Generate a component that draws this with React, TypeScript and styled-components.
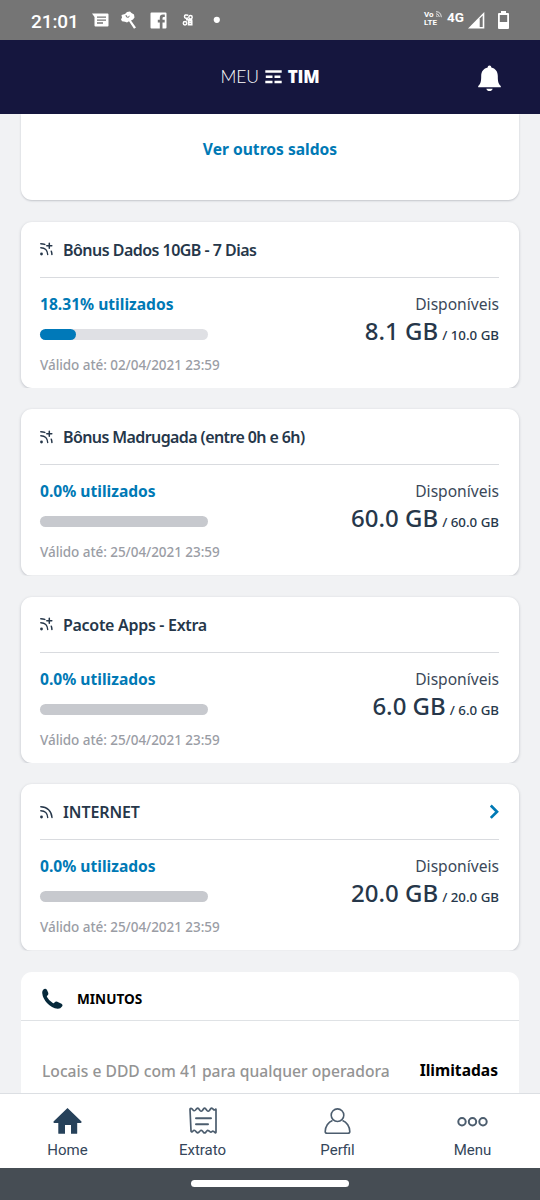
import React from "react";
import styled, { createGlobalStyle } from "styled-components";

const Global = createGlobalStyle`
  * { box-sizing: border-box; }
  body { margin: 0; background: #f1f2f4; font-family: "Noto Sans", "Open Sans", sans-serif; }
  svg { display: block; flex: none; }
`;

const Screen = styled.div`
  width: 540px;
  height: 1200px;
  display: flex;
  flex-direction: column;
  overflow: hidden;
  background: #f1f2f4;
  color: #26374a;
`;

const StatusBar = styled.header`
  height: 40px;
  flex: none;
  display: flex;
  align-items: center;
  background: #757575;
  color: #fff;
  font-family: Roboto, sans-serif;
`;

const Clock = styled.span`
  width: 59px;
  padding-top: 2px;
  margin-left: 31px;
  font-size: 19px;
  font-weight: 500;
  letter-spacing: -0.1px;
  white-space: nowrap;
`;

const VoLte = styled.div`
  margin-left: auto;
  width: 18px;
  display: flex;
  flex-direction: column;
  font-size: 8px;
  line-height: 8.5px;
  font-weight: 700;
  padding-bottom: 2px;
  white-space: nowrap;
`;

const VoLine = styled.div`
  display: flex;
  align-items: center;
  gap: 1px;
`;

const Network = styled.span`
  margin: 0 3px 7px 5px;
  width: 18px;
  font-size: 13.5px;
  font-weight: 700;
`;

const Battery = styled.div`
  margin: 0 31px 0 13px;
`;

const AppBar = styled.div`
  height: 74px;
  flex: none;
  display: grid;
  grid-template-columns: 1fr auto 1fr;
  align-items: center;
  background: #15163e;
  color: #fff;
`;

const Brand = styled.h1`
  grid-column: 2;
  margin: 0;
  display: flex;
  align-items: center;
  gap: 6px;
  font: 300 17.5px/24px Lato, sans-serif;
  letter-spacing: -0.2px;
  strong { font: 800 17px/24px "Open Sans", sans-serif; letter-spacing: -0.2px; }
`;

const Bell = styled.div`
  justify-self: end;
  margin-right: 39px;
  padding-top: 2px;
`;

const Content = styled.main`
  flex: 1;
  min-height: 0;
  overflow: hidden;
  padding: 0 21px;
  display: flex;
  flex-direction: column;
  gap: 21px;
`;

const OtherBalances = styled.section`
  height: 85.5px;
  flex: none;
  border-radius: 0 0 11px 11px;
  background: #fff;
  box-shadow: 0 1px 2px rgba(30, 40, 60, 0.22);
  text-align: center;
  padding-top: 24px;
  margin-bottom: 1px;
`;

const Link = styled.a`
  color: #0079b5;
  font-size: 15.6px;
  line-height: 22px;
  font-weight: 700;
  display: block;
`;

const Card = styled.section`
  height: 166.5px;
  flex: none;
  padding: 0 20px 0 19px;
  border-radius: 11px;
  background: #fff;
  box-shadow: 0 1px 3px rgba(30, 40, 60, 0.25);
  clip-path: inset(-3px -3px 0 -3px);
`;

const CardHeader = styled.div`
  height: 56px;
  display: flex;
  align-items: center;
  border-bottom: 1px solid #d9dbdf;
`;

const CardTitle = styled.h2<{ $spacing: number }>`
  flex: 1;
  margin: 1px 0 0 10px;
  font-size: 16px;
  line-height: 22px;
  font-weight: 600;
  letter-spacing: ${(p) => p.$spacing}px;
  white-space: nowrap;
`;

const CardBody = styled.div`
  display: flex;
  justify-content: space-between;
  padding-top: 15px;
`;

const Usage = styled.div`
  width: 200px;
`;

const Used = styled.div`
  color: #0079b5;
  font-size: 15.6px;
  line-height: 22px;
  font-weight: 700;
`;

const Track = styled.div<{ $empty: boolean }>`
  width: 168px;
  height: 11px;
  margin-top: 14px;
  border-radius: 6px;
  background: ${(p) => (p.$empty ? "#c7c9ce" : "#dfe0e4")};
`;

const Fill = styled.div`
  height: 100%;
  border-radius: 6px;
  background: #0079b9;
`;

const Expiry = styled.div`
  margin-top: 15px;
  color: #9a9da5;
  font-size: 13.5px;
  line-height: 20px;
  font-weight: 500;
  letter-spacing: -0.06px;
  white-space: nowrap;
`;

const Available = styled.div`
  text-align: right;
  font-size: 15.6px;
  line-height: 22px;
  color: #3b4859;
`;

const Amount = styled.div`
  display: flex;
  align-items: baseline;
  justify-content: flex-end;
  gap: 4px;
  margin-top: -1px;
  color: #26374a;
  font-size: 24px;
  line-height: 34px;
  font-weight: 500;
  white-space: nowrap;
`;

const Total = styled.span`
  font-size: 13.3px;
`;

const Minutes = styled.section`
  height: 160px;
  flex: none;
  border-radius: 11px 11px 0 0;
  background: #fff;
`;

const MinutesHeader = styled.div`
  height: 49px;
  padding: 6px 20px 0;
  display: flex;
  align-items: center;
  gap: 13px;
  color: #000;
  font-size: 13.6px;
  font-weight: 700;
  border-bottom: 1px solid #dfe2e5;
`;

const MinutesRow = styled.div`
  display: flex;
  justify-content: space-between;
  padding: 39px 21px 0;
  line-height: 22px;
  font-size: 15.65px;
  color: #949494;
  font-weight: 500;
  white-space: nowrap;
  strong { color: #000; font-size: 15.6px; line-height: 20px; }
`;

const TabBar = styled.nav`
  height: 75px;
  flex: none;
  display: grid;
  grid-template-columns: repeat(4, 1fr);
  background: #fff;
  border-top: 1px solid #dcdfe3;
`;

const Tab = styled.a`
  display: flex;
  flex-direction: column;
  align-items: center;
  padding-top: 13px;
  gap: 5px;
  color: #34465a;
  font: 400 15px/20px Roboto, sans-serif;
`;

const GestureBar = styled.footer`
  height: 32px;
  flex: none;
  display: flex;
  justify-content: center;
  align-items: flex-start;
  padding-top: 12px;
  background: #464d54;
`;

const GesturePill = styled.div`
  width: 158px;
  height: 7px;
  border-radius: 4px;
  background: #fff;
`;

const NotificationIcons = () => (
  <svg width="132" height="24" viewBox="90 8.500 132 24" fill="#fff">
    <path d="M92 14h15.500q1 0 1 1v11q0 1-1 1h-12q-1 0-1-1v-8.500z" />
    <path d="M97 17.700h9M97 20.600h9M97 23.500h6" stroke="#757575" strokeWidth="1.300" />
    <path d="M121.500 15.500l3.500-1 2-2 3-.5 1.500 1.500 2.500 1.500.5 3-1.500 2-2 1 5 7-2 1.300-5-7.500-2 1.200-2-.7-3-.5-1-2 1-1.500z" />
    <path d="M126 15.500l.5 2 2 .3.800-1.500" fill="none" stroke="#757575" strokeWidth="1" />
    <path d="M151.500 13h14q1 0 1 1v14q0 1-1 1h-3v-6h2.200v-2.700h-2.200v-1.500q0-1.300 1.300-1.300h1V15h-2q-3 0-3 3.200v2.100h-2V23h2v6h-8.300q-1 0-1-1V14q0-1 1-1z" />
    <g fill="none" stroke="#fff" strokeWidth="1.500">
      <path d="M188.200 15.700q-3.700-1-3.700 1.400t3.700 1.500" />
      <circle cx="190.500" cy="17.700" r="1.700" />
      <circle cx="185" cy="23.700" r="1.700" />
      <path d="M188.500 21.500h3.300v3.700h-3.300zM188.500 23.300h3.300M186 20.300h6.300" />
    </g>
    <circle cx="216.800" cy="20.300" r="3.100" />
  </svg>
);

const VoWaves = () => (
  <svg width="7" height="7" viewBox="0 0 7 7" fill="none" stroke="#fff" strokeWidth=".8">
    <path d="M1 .7q5 0 5.300 5.500M1 2.700q3 .2 3.300 3.300M1 4.700q1 .1 1.300 1.200" />
  </svg>
);

const SignalIcon = () => (
  <svg width="17" height="17" viewBox="0 0 17 17">
    <path d="M0 16.500L16.300 0v16.500z" fill="#fff" />
    <path d="M11.700 6.500L14.700 3.500V15H11.700z" fill="#757575" />
  </svg>
);

const BatteryIcon = () => (
  <svg width="11" height="18" viewBox="0 0 11 18" fill="#fff">
    <path d="M3 0h5v2h2q1 0 1 1v14q0 1-1 1H1q-1 0-1-1V3q0-1 1-1h2z" />
    <path d="M1.800 4h7.400v7H1.800z" fill="#757575" />
  </svg>
);

const BrandMark = () => (
  <svg width="17" height="14" viewBox="0 0 17 14" fill="none" stroke="#fff" strokeWidth="2.500">
    <path d="M.3 1.500h16.400M.8 6.800h6.700M9.500 6.800h5.900M.3 12.100h7.200M9.500 12.100h7.200" />
  </svg>
);

const BellIcon = () => (
  <svg width="23" height="27" viewBox="0 0 23 27" fill="#fff">
    <path d="M11.500.5c1.200 0 1.800.8 1.800 1.900 4.100.9 6.500 4 6.500 8.500 0 5.500.5 7.500 3 10.200v1.200H.2v-1.200c2.500-2.700 3-4.700 3-10.200 0-4.500 2.400-7.600 6.500-8.500 0-1.100.6-1.900 1.800-1.900zM8.300 23.700h6.400c-.5 1.500-1.600 2.300-3.200 2.300s-2.700-.8-3.200-2.300z" />
  </svg>
);

const SignalWaves = ({ plus }: { plus: boolean }) => (
  <svg width="13" height="14" viewBox="0 0 13 14" fill="none" stroke="#26374a" strokeWidth="1.400" strokeLinecap="round">
    <circle cx="1.500" cy="12" r="1.400" fill="#26374a" stroke="none" />
    <path d="M.8 5.700C4.900 5.700 7.600 8.500 7.700 12.500" />
    {plus ? (
      <path d="M.8 1.700q2.200 0 4 .7M11.300 9.300q.6 1.600.6 3.200M9.300 1.200v5M6.800 3.700h5" strokeWidth="1.500" />
    ) : (
      <path d="M.8 1.700C7 1.700 11.700 6.100 12 12.500" />
    )}
  </svg>
);

const Chevron = () => (
  <svg width="10" height="15" viewBox="0 0 10 15" fill="none" stroke="#0079b5" strokeWidth="2.700">
    <path d="M1.800 1.500L8 7.700l-6.200 6.200" />
  </svg>
);

const PhoneIcon = () => (
  <svg width="23" height="22" viewBox="0 0 23 22" fill="#06293b">
    <path d="M2.200 1.800q2-1.900 3.700 0l1.300 3q.5 1.600-.8 2.700-.8.700-.4 1.600 1.900 3.800 5.800 5.900 1 .5 1.700-.4 1.200-1.400 2.800-.8l4.200 2q1.700 1 .5 2.800-1.500 2.300-4.300 2.200Q10.700 20.100 6 15 1.700 10.200 1.200 5q-.1-2 1-3.200z" />
  </svg>
);

const HomeIcon = () => (
  <svg width="29" height="28" viewBox="0 0 29 28" fill="#26415a">
    <path d="M14.500 1L28.500 14.500q.5 1-.8 1.500h-3.500v10.200q0 .5-.5.500h-5.700v-8.700h-6v8.700H5.800q-.5 0-.5-.5V16H1.300q-1.300-.5-.8-1.500z" />
  </svg>
);

const ReceiptIcon = () => (
  <svg width="28" height="28" viewBox="0 0 28 28" fill="none" stroke="#4c5d6e" strokeWidth="1.700" strokeLinejoin="round" strokeLinecap="round">
    <path d="M1 2.500q0-1.200 1-1.200 1.300.2 2 1.700 1 1.500 2.500 0l1.200-1.300q1-.9 2 0L11 3.500q1.200 1.300 2.400 0l1.200-1.800q1-.9 2 0L18 3.500q1.200 1.300 2.400 0l1.200-1.800q1-.9 2 0l1 1q1 .6 2-.5.400-.4.400.500v22.500q-.1.900-.9.500l-1.500-1.300q-.8-.6-1.700.2-1 .9-2 0l-1.200-.8q-1-.8-1.900.2l-1.200 1.500q-1 .9-2 0l-1.200-1.500q-1.200-1.300-2.400 0l-1.300 1.300q-1 .9-2 0l-1.200-1.300q-1.500-1.500-2.500 0-.7 1-1.600.8-.4-.100-.4-1z" />
    <path d="M7 11.200h15M7 17.300h12" strokeWidth="2" />
  </svg>
);

const ProfileIcon = () => (
  <svg width="27" height="28" viewBox="0 0 27 28" fill="none" stroke="#4c5d6e" strokeWidth="1.600">
    <circle cx="13.500" cy="8.200" r="6.300" />
    <path d="M8.500 13.500C4.300 15 1.200 19.700 1.200 24.500q0 1.800 2 1.800h20.600q2 0 2-1.800c0-4.800-3.100-9.500-7.300-11" />
  </svg>
);

const DotsIcon = () => (
  <svg width="31" height="28" viewBox="0 0 31 28" fill="none" stroke="#4c5d6e" strokeWidth="2">
    <circle cx="5" cy="14.700" r="3.700" />
    <circle cx="15.500" cy="14.700" r="3.700" />
    <circle cx="26" cy="14.700" r="3.700" />
  </svg>
);

type Balance = {
  title: string;
  spacing: number;
  used: number;
  label: string;
  left: string;
  total: string;
  until: string;
  plus: boolean;
};

const balances: Balance[] = [
  { title: "Bônus Dados 10GB - 7 Dias", spacing: -0.53, used: 21.5, label: "18.31%", left: "8.1 GB", total: "10.0 GB", until: "02/04/2021 23:59", plus: true },
  { title: "Bônus Madrugada (entre 0h e 6h)", spacing: -0.6, used: 0, label: "0.0%", left: "60.0 GB", total: "60.0 GB", until: "25/04/2021 23:59", plus: true },
  { title: "Pacote Apps - Extra", spacing: -0.3, used: 0, label: "0.0%", left: "6.0 GB", total: "6.0 GB", until: "25/04/2021 23:59", plus: true },
  { title: "INTERNET", spacing: -0.1, used: 0, label: "0.0%", left: "20.0 GB", total: "20.0 GB", until: "25/04/2021 23:59", plus: false },
];

const BalanceCard = ({ item }: { item: Balance }) => (
  <Card>
    <CardHeader>
      <SignalWaves plus={item.plus} />
      <CardTitle $spacing={item.spacing}>{item.title}</CardTitle>
      {!item.plus && <Chevron />}
    </CardHeader>
    <CardBody>
      <Usage>
        <Used>{item.label} utilizados</Used>
        <Track $empty={item.used === 0}>{item.used > 0 && <Fill style={{ width: `${item.used}%` }} />}</Track>
        <Expiry>Válido até: {item.until}</Expiry>
      </Usage>
      <div>
        <Available>Disponíveis</Available>
        <Amount>
          <span>{item.left}</span>
          <Total>/ {item.total}</Total>
        </Amount>
      </div>
    </CardBody>
  </Card>
);

export default function App() {
  return (
    <Screen>
      <Global />
      <StatusBar>
        <Clock>21:01</Clock>
        <NotificationIcons />
        <VoLte>
          <VoLine>Vo<VoWaves /></VoLine>
          <span>LTE</span>
        </VoLte>
        <Network>4G</Network>
        <SignalIcon />
        <Battery><BatteryIcon /></Battery>
      </StatusBar>
      <AppBar>
        <Brand>MEU<BrandMark /><strong>TIM</strong></Brand>
        <Bell><BellIcon /></Bell>
      </AppBar>
      <Content>
        <OtherBalances><Link>Ver outros saldos</Link></OtherBalances>
        {balances.map((item) => <BalanceCard key={item.title} item={item} />)}
        <Minutes>
          <MinutesHeader><PhoneIcon />MINUTOS</MinutesHeader>
          <MinutesRow>
            <span>Locais e DDD com 41 para qualquer operadora</span>
            <strong>Ilimitadas</strong>
          </MinutesRow>
        </Minutes>
      </Content>
      <TabBar>
        <Tab><HomeIcon />Home</Tab>
        <Tab><ReceiptIcon />Extrato</Tab>
        <Tab><ProfileIcon />Perfil</Tab>
        <Tab><DotsIcon />Menu</Tab>
      </TabBar>
      <GestureBar><GesturePill /></GestureBar>
    </Screen>
  );
}
